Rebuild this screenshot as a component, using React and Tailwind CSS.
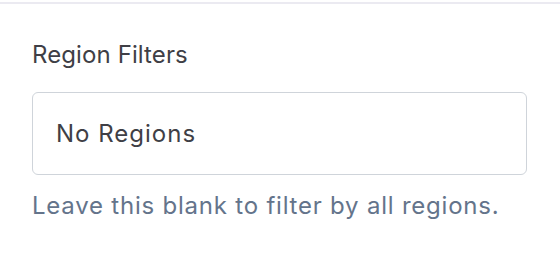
export default function App() {
  return (
    <div className="w-[560px] h-[260px] bg-white font-['Inter',sans-serif] overflow-hidden">
      <div className="h-[2px] mt-[2px] bg-[#ebeaf1]" />
      <div className="px-[32px] pt-[37px]">
        <label className="block text-[24px] leading-[28px] tracking-[0.1px] text-[#3f3f46]">
          Region Filters
        </label>
        <div className="mt-[23px] h-[83px] w-[495px] rounded-[6px] border-[1.5px] border-[#cfd4da] flex items-center pl-[23px]">
          <span className="text-[24px] leading-[28px] tracking-[1px] text-[#3f3f46]">No Regions</span>
        </div>
        <p className="mt-[17px] text-[24px] leading-[28px] tracking-[0.78px] text-[#64748b]">
          Leave this blank to filter by all regions.
        </p>
      </div>
    </div>
  );
}
